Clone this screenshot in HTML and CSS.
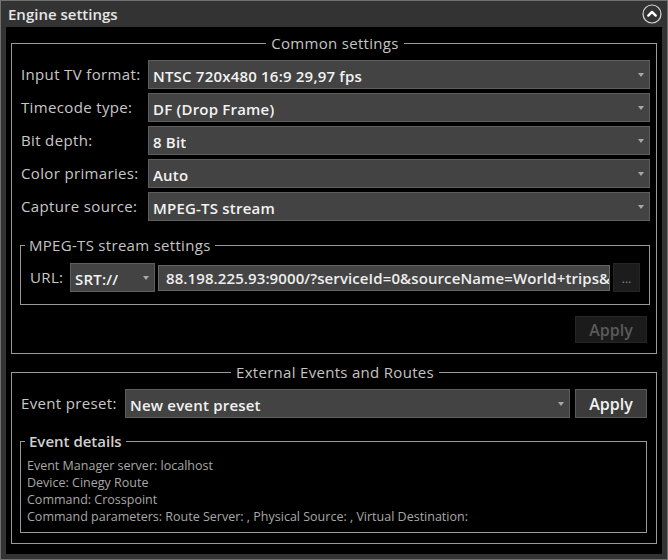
FILE: index.html
```html
<!DOCTYPE html>
<html>
<head>
<meta charset="utf-8">
<link rel="stylesheet" href="styles.css">
</head>
<body>
<div class="window">
  <div class="header">
    <span class="title">Engine settings</span>
    <svg class="collapse" width="20" height="20" viewBox="0 0 20 20">
      <circle cx="10" cy="10" r="9" fill="none" stroke="#d8d8d8" stroke-width="1.2"/>
      <path d="M6.3 11.6 L10 7.9 L13.7 11.6" fill="none" stroke="#ffffff" stroke-width="2.4" stroke-linecap="round" stroke-linejoin="round"/>
    </svg>
  </div>
  <div class="content">
    <fieldset class="group common">
      <legend class="legend-center">Common settings</legend>
      <div class="form">
        <label class="lbl">Input TV format:</label>
        <div class="combo"><span class="val">NTSC 720x480 16:9 29,97 fps</span><span class="arrow"></span></div>
        <label class="lbl">Timecode type:</label>
        <div class="combo"><span class="val">DF (Drop Frame)</span><span class="arrow"></span></div>
        <label class="lbl">Bit depth:</label>
        <div class="combo"><span class="val">8 Bit</span><span class="arrow"></span></div>
        <label class="lbl">Color primaries:</label>
        <div class="combo"><span class="val">Auto</span><span class="arrow"></span></div>
        <label class="lbl">Capture source:</label>
        <div class="combo"><span class="val">MPEG-TS stream</span><span class="arrow"></span></div>
      </div>
      <fieldset class="group sub mpeg">
        <legend class="legend-left">MPEG-TS stream settings</legend>
        <div class="url-row">
          <label class="url-lbl">URL:</label>
          <div class="combo srt"><span class="val">SRT://</span><span class="arrow"></span></div>
          <div class="textbox">88.198.225.93:9000/?serviceId=0&amp;sourceName=World+trips&amp;</div>
          <div class="dots">...</div>
        </div>
      </fieldset>
      <div class="btn-row">
        <div class="btn disabled">Apply</div>
      </div>
    </fieldset>

    <fieldset class="group external">
      <legend class="legend-center">External Events and Routes</legend>
      <div class="preset-row">
        <label class="lbl preset-lbl">Event preset:</label>
        <div class="combo preset"><span class="val">New event preset</span><span class="arrow"></span></div>
        <div class="btn enabled">Apply</div>
      </div>
      <fieldset class="group sub details">
        <legend class="legend-left strong">Event details</legend>
        <div class="line">Event Manager server: localhost</div>
        <div class="line">Device: Cinegy Route</div>
        <div class="line">Command: Crosspoint</div>
        <div class="line">Command parameters: Route Server: , Physical Source: , Virtual Destination:</div>
      </fieldset>
    </fieldset>
  </div>
</div>
</body>
</html>
```
FILE: styles.css
```css
html, body {
  margin: 0;
  padding: 0;
  background: #333333;
}
body {
  font-family: "Open Sans", "Noto Sans", sans-serif;
  font-size: 15px;
  color: #c8c8c8;
}
.window {
  width: 668px;
  height: 560px;
  box-sizing: border-box;
  border: 1px solid #707070;
  background: #333333;
  display: flex;
  flex-direction: column;
}
.header {
  height: 26px;
  display: flex;
  align-items: center;
  justify-content: space-between;
  padding: 0 5px 0 7px;
}
.title {
  font-weight: 600;
  color: #e6e6e6;
  font-size: 15px;
  line-height: 26px;
  margin-top: -1px;
}
.collapse {
  display: block;
  margin-top: -1px;
}
.content {
  flex: 1;
  background: #000000;
  margin: 0 5px 5px 5px;
  padding: 6px 5px 0 5px;
  box-sizing: border-box;
}
.group {
  margin: 0;
  border: 1px solid #9a9a9a;
  min-width: 0;
}
.group legend {
  line-height: 20px;
  font-size: 15px;
  color: #c4c4c4;
  letter-spacing: 0.3px;
}
.legend-center {
  margin: 0 auto;
  padding: 0 5px;
}
.legend-left {
  margin-left: -5px;
  padding: 0 4px;
}
.legend-left.strong {
  font-weight: 600;
  color: #d0d0d0;
  letter-spacing: 0;
  margin-left: -2px;
}
.common {
  padding: 7px 6px 10px 8px;
}
.form {
  display: grid;
  grid-template-columns: 128px 1fr;
  grid-auto-rows: 29px;
  row-gap: 4px;
}
.lbl {
  padding-left: 1px;
  line-height: 29px;
  color: #c8c8c8;
  letter-spacing: 0.35px;
  white-space: nowrap;
}
.combo {
  position: relative;
  background: #434343;
  border: 1px solid #5e5e5e;
  box-sizing: border-box;
  height: 29px;
  display: flex;
  align-items: center;
  padding: 2px 16px 0 4px;
}
.val {
  font-weight: 600;
  color: #f2f2f2;
  letter-spacing: 0.2px;
  white-space: nowrap;
  overflow: hidden;
}
.arrow {
  position: absolute;
  right: 5px;
  top: 12px;
  width: 0;
  height: 0;
  border-left: 3px solid transparent;
  border-right: 3px solid transparent;
  border-top: 4px solid #a8a8a8;
}
.mpeg {
  margin: 14px 0 0 0;
  padding: 8px 9px 12px 9px;
}
.url-row {
  display: flex;
  align-items: flex-start;
  height: 29px;
}
.url-lbl {
  width: 40px;
  line-height: 29px;
  color: #c8c8c8;
  letter-spacing: 0.35px;
}
.srt {
  width: 85px;
  flex: none;
}
.textbox {
  flex: 1;
  min-width: 0;
  margin: 2px 3px 0 3px;
  height: 26px;
  box-sizing: border-box;
  background: #444444;
  border: 1px solid #666666;
  padding: 1px 0 0 7px;
  line-height: 22px;
  font-weight: 600;
  color: #eeeeee;
  letter-spacing: 0.1px;
  white-space: nowrap;
  overflow: hidden;
}
.dots {
  width: 27px;
  height: 29px;
  box-sizing: border-box;
  background: #1c1c1c;
  border: 1px solid #262626;
  color: #8a8a8a;
  font-size: 12px;
  text-align: center;
  line-height: 29px;
  flex: none;
}
.btn-row {
  display: flex;
  justify-content: flex-end;
  margin-top: 11px;
}
.btn {
  width: 72px;
  box-sizing: border-box;
  text-align: center;
  font-weight: 600;
  font-size: 16px;
  margin-right: 3px;
  flex: none;
}
.btn.disabled {
  height: 27px;
  line-height: 26px;
  background: #1b1b1b;
  border: 1px solid #252525;
  color: #5a5a5a;
}
.btn.enabled {
  height: 29px;
  line-height: 28px;
  background: #3b3b3b;
  border: 1px solid #5a5a5a;
  color: #f2f2f2;
}
.external {
  margin: 8px 0 0 0;
  padding: 7px 6px 10px 8px;
}
.preset-row {
  display: flex;
  align-items: center;
}
.preset-lbl {
  width: 104px;
  flex: none;
}
.preset {
  flex: 1;
  margin-right: 5px;
}
.details {
  margin: 13px 3px 0 0;
  padding: 6px 6px 7px 6px;
}
.line {
  font-size: 12.5px;
  line-height: 17px;
  color: #a8a8a8;
  white-space: nowrap;
}
```
